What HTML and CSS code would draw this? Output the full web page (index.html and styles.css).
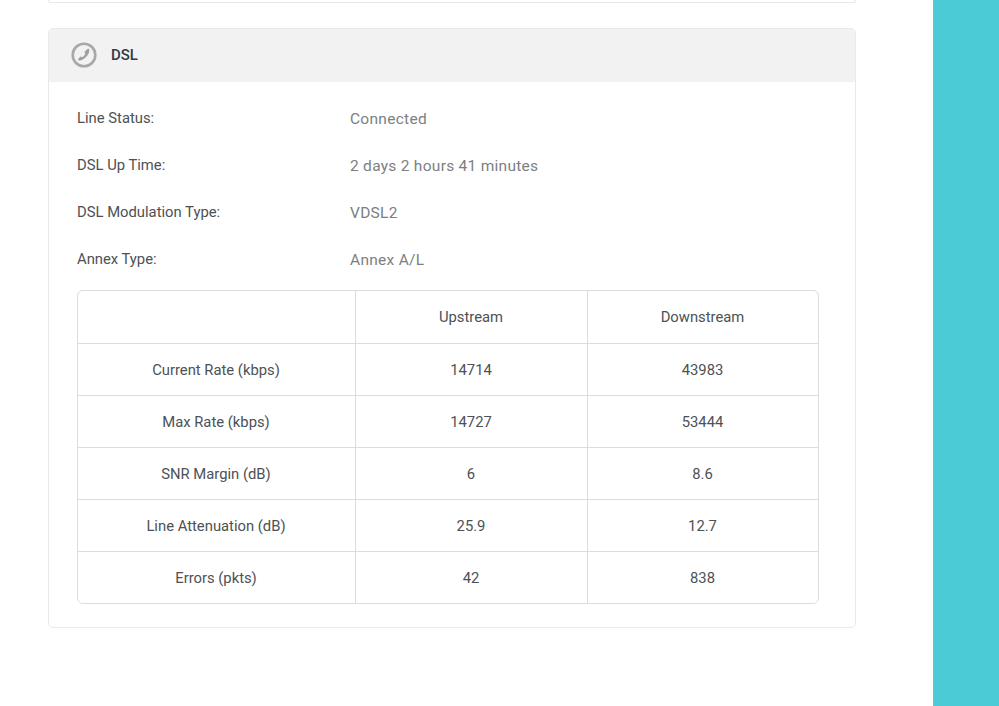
FILE: index.html
```html
<!DOCTYPE html>
<html lang="en">
<head>
<meta charset="utf-8">
<title>DSL</title>
<link rel="stylesheet" href="styles.css">
</head>
<body>
<div class="page">
  <main class="content">
    <div class="stub"></div>
    <section class="card">
      <header class="card-head">
        <svg class="dsl-icon" viewBox="0 0 26 26" width="26" height="26">
          <circle cx="13" cy="13" r="11.3" fill="none" stroke="#a8a8a8" stroke-width="2.6"/>
          <path d="M18.2 7.2c.9 4.6-4.6 11.2-10 11.2-.8 0-1.2-.5-1.2-1.1l2.6-2.7 1.9.6c1.4-.9 2.3-2.1 2.9-3.6l-1-1.7 3.1-3c.8-.2 1.4-.1 1.7.3z" fill="#a0a0a0"/>
        </svg>
        <h2 class="card-title">DSL</h2>
      </header>
      <div class="card-body">
        <dl class="info">
          <div class="info-row"><dt>Line Status:</dt><dd>Connected</dd></div>
          <div class="info-row"><dt>DSL Up Time:</dt><dd>2 days 2 hours 41 minutes</dd></div>
          <div class="info-row"><dt>DSL Modulation Type:</dt><dd>VDSL2</dd></div>
          <div class="info-row"><dt>Annex Type:</dt><dd>Annex A/L</dd></div>
        </dl>
        <table class="stats">
          <thead>
            <tr><th></th><th>Upstream</th><th>Downstream</th></tr>
          </thead>
          <tbody>
            <tr><td>Current Rate (kbps)</td><td>14714</td><td>43983</td></tr>
            <tr><td>Max Rate (kbps)</td><td>14727</td><td>53444</td></tr>
            <tr><td>SNR Margin (dB)</td><td>6</td><td>8.6</td></tr>
            <tr><td>Line Attenuation (dB)</td><td>25.9</td><td>12.7</td></tr>
            <tr><td>Errors (pkts)</td><td>42</td><td>838</td></tr>
          </tbody>
        </table>
      </div>
    </section>
  </main>
  <aside class="side"></aside>
</div>
</body>
</html>
```
FILE: styles.css
```css
* { box-sizing: border-box; }
html, body { margin: 0; height: 100%; overflow: hidden; background: #fff; }
body { font-family: Roboto, "Liberation Sans", sans-serif; color: #4d5155; font-size: 14.8px; }
.page { display: flex; height: 706px; }
.content { width: 933px; padding-left: 48px; }
.side { width: 66px; background: #4bcbd6; }
.stub { width: 808px; height: 3px; border: 1px solid #e8e8e8; border-top: 0; border-radius: 0 0 4px 4px; margin-bottom: 25px; }
.card { width: 808px; height: 600px; border: 1px solid #e9e9e9; border-radius: 5px; overflow: hidden; }
.card-head { display: flex; align-items: center; height: 53px; background: #f2f2f2; padding-left: 22px; gap: 14px; padding-bottom: 1px; }
.dsl-icon { flex: none; }
.card-title { margin: 0; font-size: 15px; font-weight: 500; color: #333a42; }
.card-body { padding: 0 36px 0 28px; }
.info { margin: 0; padding-top: 12px; height: 208px; }
.info-row { display: flex; height: 47px; align-items: center; }
.info dt { width: 273px; color: #4d5155; }
.info dd { margin: 0; padding-top: 2px; color: #7c7f82; font-size: 15.5px; letter-spacing: .28px; }
.stats { width: 742px; border-collapse: separate; border-spacing: 0; border: 1px solid #dcdcdc; border-radius: 6px; table-layout: fixed; text-align: center; }
.stats th, .stats td { font-weight: 400; height: 52px; border-left: 1px solid #dcdcdc; border-top: 1px solid #dcdcdc; padding: 0 1px 0 0; }
.stats th { border-top: 0; height: 52px; }
.stats th:first-child, .stats td:first-child { border-left: 0; width: 277px; }
.stats th:nth-child(2), .stats td:nth-child(2) { width: 232px; }
.stats th:nth-child(3), .stats td:nth-child(3) { width: 231px; }
```
